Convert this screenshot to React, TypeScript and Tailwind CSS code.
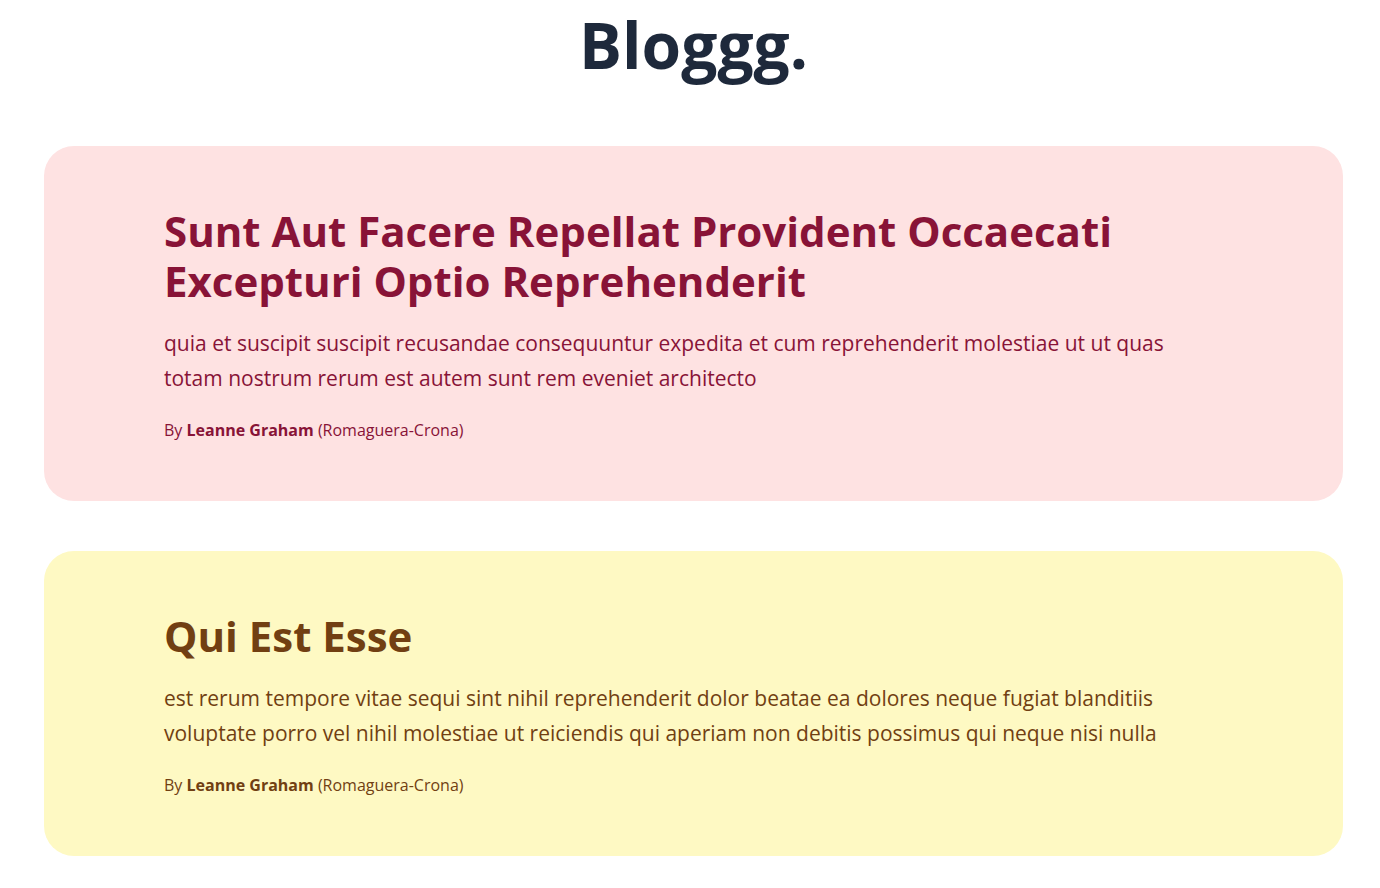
const posts = [
  {
    title: "Sunt Aut Facere Repellat Provident Occaecati Excepturi Optio Reprehenderit",
    body: "quia et suscipit suscipit recusandae consequuntur expedita et cum reprehenderit molestiae ut ut quas totam nostrum rerum est autem sunt rem eveniet architecto",
    card: "bg-[#fee2e2] text-[#881337]",
  },
  {
    title: "Qui Est Esse",
    body: "est rerum tempore vitae sequi sint nihil reprehenderit dolor beatae ea dolores neque fugiat blanditiis voluptate porro vel nihil molestiae ut reiciendis qui aperiam non debitis possimus qui neque nisi nulla",
    card: "bg-[#fef9c3] text-[#713f12]",
  },
];

export default function App() {
  return (
    <div className="min-h-screen bg-white pb-10" style={{ fontFamily: '"Open Sans", "Noto Sans", sans-serif' }}>
      <h1 className="pt-[13px] pl-[7px] text-center text-[64px] font-bold leading-none text-[#1e293b]">Bloggg.</h1>

      <div className="mt-[69px] flex flex-col gap-[50px] pl-[44px] pr-[37px]">
        {posts.map((p) => (
          <div key={p.title} className={`rounded-[30px] px-[120px] pt-[60px] pb-[59px] ${p.card}`}>
            <h2 className="text-[42px] font-bold leading-[50px]">{p.title}</h2>
            <p className="mt-[20px] text-[21px] leading-[35px]">{p.body}</p>
            <p className="mt-[22px] text-[16px] leading-[24px]">
              By <span className="font-bold">Leanne Graham</span> (Romaguera-Crona)
            </p>
          </div>
        ))}
      </div>
    </div>
  );
}
